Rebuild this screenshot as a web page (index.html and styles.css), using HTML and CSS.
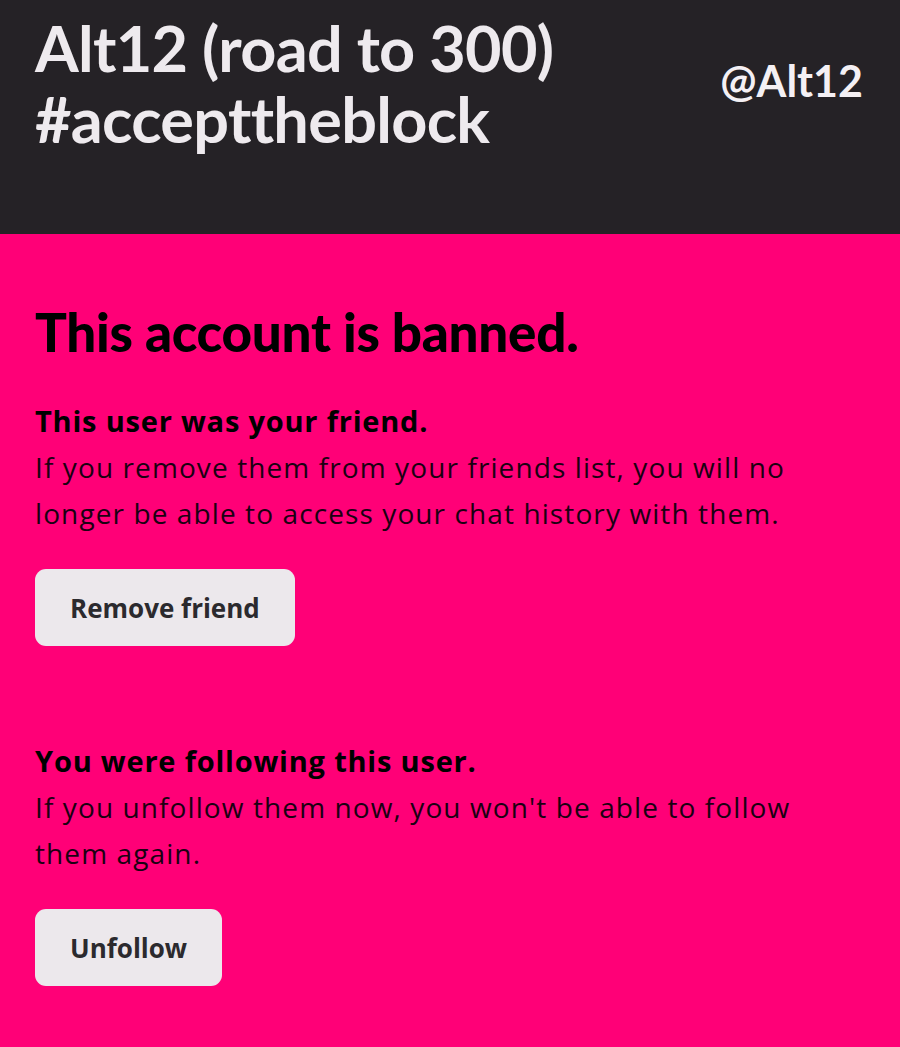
FILE: index.html
```html
<!DOCTYPE html>
<html lang="en">
<head>
<meta charset="utf-8">
<title>Alt12</title>
<link rel="stylesheet" href="styles.css">
</head>
<body>
<header class="header">
  <h1 class="name">Alt12 (road to 300)<br>#accepttheblock</h1>
  <div class="handle">@Alt12</div>
</header>
<main class="main">
  <h2 class="banned">This account is banned.</h2>
  <section class="block">
    <h3 class="block-title">This user was your friend.</h3>
    <p class="block-text">If you remove them from your friends list, you will no longer be able to access your chat history with them.</p>
    <button class="btn">Remove friend</button>
  </section>
  <section class="block block-second">
    <h3 class="block-title">You were following this user.</h3>
    <p class="block-text">If you unfollow them now, you won't be able to follow them again.</p>
    <button class="btn">Unfollow</button>
  </section>
</main>
</body>
</html>
```
FILE: styles.css
```css
* { box-sizing: border-box; }
html, body { margin: 0; padding: 0; }
body {
  background: #ff0077;
  font-family: "Open Sans", "Noto Sans", sans-serif;
  color: #000;
  min-height: 1047px;
}
.header {
  background: #252226;
  height: 234px;
  display: flex;
  justify-content: space-between;
  align-items: flex-start;
  padding: 0 37px 0 35px;
}
.name {
  margin: 12px 0 0;
  font-family: Lato, sans-serif;
  font-weight: 700;
  font-size: 63px;
  line-height: 71px;
  color: #eeeaee;
  letter-spacing: -0.7px;
}
.handle {
  margin-top: 57px;
  font-family: Lato, sans-serif;
  font-weight: 700;
  font-size: 43px;
  line-height: 48px;
  color: #f4f0f4;
}
.main {
  padding: 0 35px;
}
.banned {
  margin: 68px 0 0;
  font-family: Lato, sans-serif;
  font-weight: 900;
  font-size: 53px;
  line-height: 60px;
  letter-spacing: -0.3px;
}
.block { margin-top: 40px; }
.block-second { margin-top: 96px; }
.block-title {
  margin: 0;
  font-weight: 700;
  font-size: 29px;
  line-height: 38px;
  letter-spacing: 0.8px;
}
.block-text {
  margin: 4px 0 0;
  font-weight: 400;
  font-size: 28px;
  line-height: 46px;
  letter-spacing: 1.1px;
  color: #1a0012;
  max-width: 800px;
}
.btn {
  margin-top: 33px;
  display: block;
  background: #ece8ec;
  border: none;
  border-radius: 11px;
  height: 77px;
  padding: 0 35px;
  font-family: "Open Sans", sans-serif;
  font-weight: 700;
  font-size: 26px;
  color: #2b2a2e;
  cursor: pointer;
}
```
